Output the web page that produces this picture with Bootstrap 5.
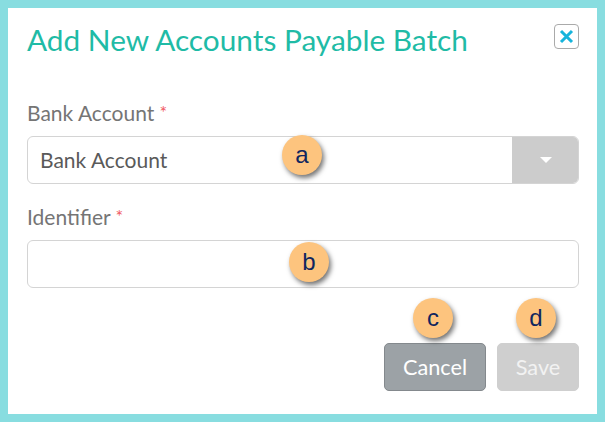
<!DOCTYPE html>
<html lang="en"><head><meta charset="utf-8"><title>Add New Accounts Payable Batch</title>
<link rel="stylesheet" href="https://cdn.jsdelivr.net/npm/bootstrap@5.3.0/dist/css/bootstrap.min.css">
<style>
html,body{height:100%}
body{background:#88dde0;padding:8px;font-family:Lato,sans-serif;overflow:hidden}
.panel-box{position:relative;background:#fff;height:406px;padding:0 18px 0 19px}
.head-row{height:62px}
.title-text{color:#1fbba6;font-size:29.8px;font-weight:400;font-family:Lato,sans-serif;margin:0;line-height:1.2;padding-top:2px}
.close-box{width:25px;height:25px;padding:0;background:#fff;border:1px solid #aaa;border-radius:4px;display:flex;align-items:center;justify-content:center;margin-top:-5px}
.label-text{color:#757575;font-size:21px;line-height:24px;margin:0 0 11px}
.req{color:#f0595f;font-size:18px;vertical-align:2px}
.field-box{height:48px;border:1px solid #d4d4d4;border-radius:6px;font-size:21px;color:#555;padding:0 13px;box-shadow:none}
.select-box{height:48px;border:1px solid #d4d4d4;border-radius:6px;overflow:hidden;color:#5a5a5a;font-size:21px}
.caret-cell{width:67px;background:#cccccc;margin:-1px -1px -1px 0}
.caret-shape{width:0;height:0;border-left:6.5px solid transparent;border-right:6.5px solid transparent;border-top:6.5px solid #fff}
.btn-row{margin-top:55px;gap:11px}
.btn-cancel,.btn-save{height:48px;font-size:21.7px;color:#fff;border-radius:5px;padding:0;font-family:Lato,sans-serif}
.btn-cancel{width:102px;background:#9ca2a6;border:1px solid #84898d}
.btn-save{width:82px;background:#cfcfcf;border:1px solid #cfcfcf;opacity:1}
.btn-save:disabled{background:#cfcfcf;border-color:#cfcfcf;color:#f2f2f2;opacity:1}
.callout{position:absolute;width:40px;height:40px;border-radius:50%;background:#fdc47e;color:#10265f;font-family:"Liberation Sans",sans-serif;font-size:24px;display:flex;align-items:center;justify-content:center;box-shadow:2px 3px 5px rgba(0,0,0,.55)}
.call-a{left:274px;top:127px}.call-b{left:281px;top:234px}.call-c{left:405px;top:290px}.call-d{left:508px;top:290px}
</style></head>
<body>
<div class="panel-box">
  <div class="head-row d-flex justify-content-between align-items-center">
    <h1 class="title-text">Add New Accounts Payable Batch</h1>
    <button type="button" class="close-box" aria-label="Close">
      <svg width="15" height="15" viewBox="0 0 15 15"><path d="M2 2 L13 13 M13 2 L2 13" stroke="#16b4dc" stroke-width="3" fill="none"/></svg>
    </button>
  </div>
  <form>
    <div style="height:30px"></div>
    <p class="label-text">Bank Account <span class="req">*</span></p>
    <div class="select-box d-flex">
      <div class="flex-grow-1 d-flex align-items-center ps-2 ms-1 me-1">Bank Account</div>
      <div class="caret-cell d-flex align-items-center justify-content-center"><span class="caret-shape"></span></div>
    </div>
    <div style="height:20px"></div>
    <p class="label-text">Identifier <span class="req">*</span></p>
    <input type="text" class="form-control field-box" aria-label="Identifier">
    <div class="d-flex justify-content-end btn-row">
      <button type="button" class="btn btn-cancel">Cancel</button>
      <button type="button" class="btn btn-save" disabled>Save</button>
    </div>
  </form>
  <span class="callout call-a">a</span>
  <span class="callout call-b">b</span>
  <span class="callout call-c">c</span>
  <span class="callout call-d">d</span>
</div>
<script src="https://cdn.jsdelivr.net/npm/bootstrap@5.3.0/dist/js/bootstrap.bundle.min.js"></script>
</body></html>
